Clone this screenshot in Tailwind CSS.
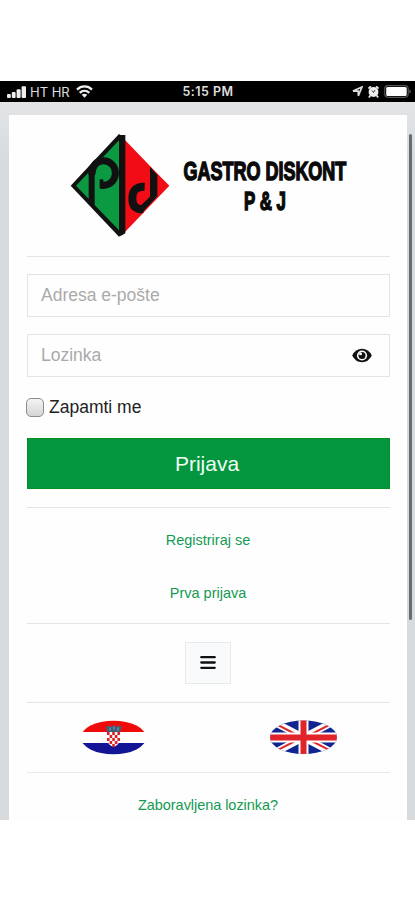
<!DOCTYPE html>
<html lang="hr">
<head>
<meta charset="utf-8">
<meta name="viewport" content="width=device-width, initial-scale=1">
<title>Gastro Diskont P&amp;J – Prijava</title>
<script src="https://cdn.jsdelivr.net/npm/@tailwindcss/browser@4"></script>
</head>
<body class="bg-white h-[900px] overflow-hidden pt-[81px] font-['Liberation_Sans',Arial,sans-serif]">
<!-- Status bar -->
<header class="h-[21px] bg-black text-[#dedede] grid grid-cols-[1fr_auto_1fr] items-center pl-[7px] pr-[4px] font-['Inter','Liberation_Sans',sans-serif] text-[13px] leading-none">
  <div class="flex items-center">
    <svg class="w-[20px] h-[12px]" viewBox="0 0 20 12" fill="#eee"><rect y="8" width="3.8" height="4" rx="1"/><rect x="4.800" y="6" width="3.800" height="6" rx="1"/><rect x="9.600" y="3.200" width="4" height="8.800" rx="1"/><rect x="14.600" y=".2" width="4.400" height="11.800" rx="1"/></svg>
    <span class="ml-[3px] pt-px whitespace-nowrap">HT HR</span>
    <svg class="ml-[6px] w-[17px] h-[13px]" viewBox="0 0 17 13" fill="none" stroke="#eee" stroke-width="2.300"><path d="M1 4.600c4.300-4.200 10.700-4.200 15 0M3.700 7.800c2.800-2.600 6.800-2.600 9.600 0"/><path d="M5.700 9.800q2.800-2.200 5.600 0L8.500 12.700z" fill="#eee" stroke="none"/></svg>
  </div>
  <span class="font-semibold text-[12.500px] tracking-[0.450px] whitespace-nowrap pt-[2px] pr-[2px]">5:15 PM</span>
  <div class="flex items-center justify-end gap-[5px]">
    <svg class="w-[11px] h-[11px]" viewBox="0 0 11 11" fill="none" stroke="#ddd" stroke-width="1.700"><path d="M10 1 6.300 9.800V5.100H1z"/></svg>
    <svg class="w-[11px] h-[12px]" viewBox="0 0 11 12"><path d="M.5 2.500 3 .3M10.500 2.500 8 .3M2.300 9.500.9 11.500M8.700 9.500l1.400 2" stroke="#eee" stroke-width="1.700"/><circle cx="5.500" cy="6" r="4.900" fill="#eee"/><path d="M4 4.500 5.500 6.500 7 4" fill="none" stroke="#444"/></svg>
    <svg class="w-[27px] h-[13px]" viewBox="0 0 27 13"><rect x=".7" y=".7" width="23.500" height="11.600" rx="3.500" fill="#000" stroke="#555" stroke-width="1.200"/><rect x="2.200" y="2" width="20.500" height="9" rx="1.500" fill="#fff"/><path d="M25.300 4.500v4q1.500-.6 1.500-2t-1.500-2" fill="#666"/></svg>
  </div>
</header>

<main class="relative h-[718px] bg-[#d8dbde] bg-gradient-to-b from-[#e2e4e6] to-[#d8dbde] to-[60px] pt-[13px] pl-[9px] pr-[8px]">
  <section class="h-[705px] bg-[#fefefe] px-[17.500px] flex flex-col">
    <!-- Brand -->
    <div class="flex h-[142px] shrink-0 border-b border-[#e4e6e6] pl-[33px]">
      <svg class="mt-[10px] w-[120px] h-[120px] shrink-0" viewBox="0 0 360 360">
        <path d="M177 27 32 182 177 335 190 325V36z" fill="#111"/>
        <path d="M177 46V316L48 182z" fill="#0b9a42"/>
        <path d="M190 40 270 123 328 182 246 268 190 326z" fill="#f20d16"/>
        <path d="M181 30H196V325L181 334z" fill="#111"/>
        <path d="M86 125 104 106V251L86 234z" fill="#111"/>
        <path d="M95 150C97 120 110 107 130 107A36 37 0 1 1 122 180" fill="none" stroke="#111" stroke-width="21"/>
        <path d="M119 163H130V190H119z" fill="#111"/>
        <path d="M254 185Q217 183 217 221C217 246 232 253 250 253" fill="none" stroke="#111" stroke-width="24"/>
        <path d="M270 125 292 150V214L246 263 234 250 270 215z" fill="#111"/>
      </svg>
      <svg class="w-[190px] h-[120px] -ml-[7px] shrink-0 overflow-visible" viewBox="0 0 190 120" font-family="Liberation Sans, Arial, sans-serif" font-weight="700" font-size="26" fill="#0a0a0a" stroke="#0a0a0a" stroke-width="1.500">
        <text transform="translate(10.500 65) scale(.692 1)">GASTRO DISKONT</text>
        <text transform="translate(71 95) scale(.65 1)">P &amp; J</text>
      </svg>
    </div>
    <!-- Sign-in form -->
    <div class="mt-[16.500px] h-[43.500px] shrink-0 border-[1.500px] border-[#e3e5e5] flex items-center px-[13.500px] text-[17.500px] text-[#aaa]">Adresa e-pošte</div>
    <div class="mt-[16.500px] h-[43.500px] shrink-0 border-[1.500px] border-[#e3e5e5] flex items-center justify-between pl-[13.500px] pr-[17px] text-[17.500px] text-[#aaa]">Lozinka
      <svg class="w-[20px] h-[15px]" viewBox="0 0 20 15"><path d="M.2 7.500Q3.500.8 10 .8T19.800 7.500Q16.500 14.200 10 14.200T.2 7.500" fill="#111"/><circle cx="10" cy="7.500" r="5.100" fill="#fefefe"/><circle cx="10" cy="7.500" r="3.500" fill="#111"/><circle cx="8.500" cy="5.800" r="1.500" fill="#fefefe"/></svg>
    </div>
    <label class="mt-[20px] h-[20px] shrink-0 flex items-center -ml-[1px] text-[17.500px] text-[#222]"><span class="w-[18.500px] h-[19px] rounded-[5px] border-[1.500px] border-[#8c8c8c] bg-gradient-to-b from-[#f4f4f4] to-[#d5d5d5] mr-[5px]"></span>Zapamti me</label>
    <button class="mt-[21px] h-[51px] shrink-0 bg-[#03963f] border border-[#078f22] text-[#f2fff5] text-[21px] pr-[2px]">Prijava</button>
    <nav class="mt-[17.500px] h-[117.500px] shrink-0 border-y border-[#e4e6e6] flex flex-col items-center pt-[22px] text-[14.500px] leading-[20px] text-[#159a52]">
      <a>Registriraj se</a>
      <a class="mt-[33.500px]">Prva prijava</a>
    </nav>
    <div class="h-[79px] shrink-0 border-b border-[#e4e6e6] flex justify-center pt-[17.500px]">
      <button class="w-[46px] h-[42px] border-[1.500px] border-[#e7eaeb] bg-[#f8fafb] flex items-center justify-center">
        <svg class="w-[16px] h-[16px]" viewBox="0 0 16 16" stroke="#111" stroke-width="2.300" stroke-linecap="round"><path d="M1.300 2.200h13.400M1.300 7.500h13.400M1.300 12.800h13.400"/></svg>
      </button>
    </div>
    <!-- Language selection -->
    <div class="h-[70px] shrink-0 border-b border-[#e8e9e9] flex justify-between pl-[55.500px] pr-[53px] pt-[17px]">
      <svg class="w-[63px] h-[35px]" viewBox="0 0 63 35"><defs><clipPath id="hr"><ellipse cx="31.500" cy="17.500" rx="32.500" ry="16.800"/></clipPath></defs><g clip-path="url(#hr)"><path d="M0 0H63V12H0z" fill="#f00b0b"/><path d="M0 12H63V23H0z" fill="#fff"/><path d="M0 23H63V35H0z" fill="#111596"/></g>
        <path d="M25 12H38V20Q37 25 31.500 27 26 25 25 20z" fill="#fff"/>
        <path d="M25 12h2.600v3H25zM30.200 12h2.600v3h-2.600zM35.400 12H38v3h-2.600zM27.600 15h2.600v3h-2.600zM32.800 15h2.600v3h-2.600zM25 18h2.600v3H25zM30.200 18h2.600v3h-2.600zM35.400 18H38v3h-2.600zM27.600 21h2.600v3h-2.600zM32.800 21h2.600v3h-2.600zM30.200 24h2.600v3h-2.600z" fill="#e51d25"/>
        <path d="M24 7 26.500 5.500 29 7 31.500 5 34 7 36.500 5.500 39.500 7 38 12H25z" fill="#39627f"/><path d="M28 7.500v3M32 6.500v3M36 7.500v3" stroke="#8d9f9f"/></svg>
      <svg class="w-[67px] h-[35px]" viewBox="0 0 67 35"><defs><clipPath id="gb"><ellipse cx="33.500" cy="17.300" rx="33.500" ry="16.800"/></clipPath></defs><g clip-path="url(#gb)"><path d="M0 0H67V35H0z" fill="#102590"/><path d="M0 0 67 35M67 0 0 35" stroke="#fff" stroke-width="7"/><path d="M0 1 33 18M67 1 34 18M0 34 33 17M67 34 34 17" stroke="#e1272d" stroke-width="2"/><path d="M33.500 0V35M0 17.500H67" stroke="#fff" stroke-width="10"/><path d="M33.500 0V35M0 17.500H67" stroke="#e1232a" stroke-width="6"/></g></svg>
    </div>
    <a class="mt-[22px] text-center text-[14.500px] leading-[20px] tracking-[-0.050px] text-[#159a52]">Zaboravljena lozinka?</a>
  </section>
  <!-- Scroll indicator -->
  <div class="absolute left-[408.500px] top-[31.500px] w-[3px] h-[486px] rounded-full bg-[#686b6d]"></div>
</main>
</body>
</html>
